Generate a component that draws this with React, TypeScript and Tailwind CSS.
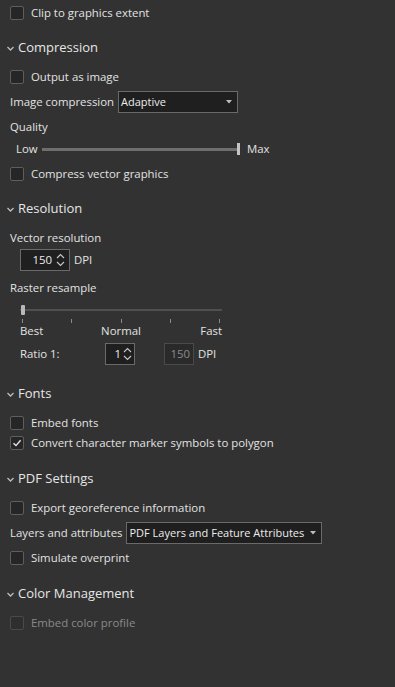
import React from 'react';

const FONT = { fontFamily: '"Open Sans", "Noto Sans", "Liberation Sans", sans-serif' };

function Check({ checked = false, disabled = false }: { checked?: boolean; disabled?: boolean }) {
  return (
    <span
      className={`w-[14px] h-[14px] rounded-[2px] border flex items-center justify-center shrink-0 ${
        disabled ? 'border-[#4a4a4a] bg-[#2e2e2e]' : 'border-[#5e5e5e] bg-[#262626]'
      }`}
    >
      {checked && (
        <svg width="10" height="10" viewBox="0 0 10 10">
          <path d="M1.5 5.2 L4 7.6 L8.6 2.2" fill="none" stroke="#e6e6e6" strokeWidth="1.4" />
        </svg>
      )}
    </span>
  );
}

function CheckRow({ label, checked, disabled, className }: { label: string; checked?: boolean; disabled?: boolean; className: string }) {
  return (
    <div className={`flex items-center pl-[10px] gap-[7px] ${className}`}>
      <Check checked={checked} disabled={disabled} />
      <span className={`text-[11.4px] ${disabled ? 'text-[#8a8a8a]' : 'text-[#e2e2e2]'}`}>{label}</span>
    </div>
  );
}

function Header({ title, className }: { title: string; className: string }) {
  return (
    <div className={`flex items-center pl-[6px] gap-[3px] ${className}`}>
      <svg width="9" height="9" viewBox="0 0 9 9">
        <path d="M1.5 3 L4.5 6 L7.5 3" fill="none" stroke="#bdbdbd" strokeWidth="1.3" />
      </svg>
      <span className="text-[13px] text-[#e6e6e6]">{title}</span>
    </div>
  );
}

function Label({ text, className }: { text: string; className: string }) {
  return (
    <div className={`flex items-center pl-[10px] text-[11.4px] text-[#e2e2e2] ${className}`}>{text}</div>
  );
}

function Arrows() {
  return (
    <svg width="9" height="16" viewBox="0 0 9 16">
      <path d="M1 6 L4.5 2.5 L8 6" fill="none" stroke="#c8c8c8" strokeWidth="1.1" />
      <path d="M1 10 L4.5 13.5 L8 10" fill="none" stroke="#c8c8c8" strokeWidth="1.1" />
    </svg>
  );
}

function Dropdown({ value, className }: { value: string; className: string }) {
  return (
    <div className={`h-[22px] border border-[#6a6a6a] bg-[#1f1f1f] flex items-center justify-between pl-[2px] pr-[5px] ${className}`}>
      <span className="text-[11px] text-[#ececec] whitespace-nowrap">{value}</span>
      <svg width="6" height="4" viewBox="0 0 6 4" className="shrink-0">
        <path d="M0 0 L6 0 L3 3.5 Z" fill="#bdbdbd" />
      </svg>
    </div>
  );
}

export default function App() {
  return (
    <div className="w-[395px] h-[687px] bg-[#323232] overflow-hidden" style={FONT}>
      <CheckRow label="Clip to graphics extent" className="h-[26px]" />

      <Header title="Compression" className="h-[24px] mt-[10px]" />
      <CheckRow label="Output as image" className="h-[24px] mt-[5px]" />
      <div className="flex items-center h-[24px] mt-[1px] pl-[10px] gap-[4px]">
        <span className="text-[11.4px] text-[#e2e2e2]">Image compression</span>
        <Dropdown value="Adaptive" className="w-[120px]" />
      </div>
      <Label text="Quality" className="h-[24px] mt-[1px]" />
      <div className="flex items-center h-[20px] pl-[16px] gap-[4px]">
        <span className="text-[11.4px] text-[#e2e2e2] w-[22px]">Low</span>
        <div className="w-[195px] h-[3px] bg-[#6e6e6e] mt-[1px]" />
        <div className="w-[3px] h-[12px] bg-[#c4c4c4] -ml-[4px]" />
        <span className="text-[11.4px] text-[#e2e2e2] ml-[3px]">Max</span>
      </div>
      <CheckRow label="Compress vector graphics" className="h-[24px] mt-[3px]" />

      <Header title="Resolution" className="h-[24px] mt-[11px]" />
      <Label text="Vector resolution" className="h-[24px] mt-[5px]" />
      <div className="flex items-center h-[22px] pl-[20px] gap-[4px] -mt-[1px]">
        <div className="w-[50px] h-[22px] border border-[#6a6a6a] bg-[#1f1f1f] flex items-center justify-end pr-[4px] gap-[4px]">
          <span className="text-[11.4px] text-[#ececec]">150</span>
          <Arrows />
        </div>
        <span className="text-[11.4px] text-[#e2e2e2]">DPI</span>
      </div>
      <Label text="Raster resample" className="h-[24px] mt-[5px]" />
      <div className="pl-[20px] mt-[4px] w-[222px]">
        <div className="relative h-[12px] flex items-center">
          <div className="w-full h-[2px] bg-[#505050]" />
          <div className="absolute left-[1px] top-[1px] w-[4px] h-[10px] bg-[#b8b8b8] rounded-[1px]" />
        </div>
        <div className="flex justify-between px-[2px] mt-[3px] h-[4px]">
          <span className="w-[1px] h-[4px] bg-[#8a8a8a]" />
          <span className="w-[1px] h-[4px] bg-[#8a8a8a]" />
          <span className="w-[1px] h-[4px] bg-[#8a8a8a]" />
          <span className="w-[1px] h-[4px] bg-[#8a8a8a]" />
          <span className="w-[1px] h-[4px] bg-[#8a8a8a]" />
        </div>
        <div className="grid grid-cols-3 text-[11.4px] text-[#e2e2e2] h-[16px] leading-[16px]">
          <span>Best</span>
          <span className="text-center">Normal</span>
          <span className="text-right">Fast</span>
        </div>
      </div>
      <div className="flex items-center h-[22px] mt-[4px] pl-[20px]">
        <span className="text-[11.4px] text-[#e2e2e2] w-[85px]">Ratio 1:</span>
        <div className="w-[30px] h-[22px] border border-[#6a6a6a] bg-[#1f1f1f] flex items-center justify-end pr-[2px] gap-[2px]">
          <span className="text-[11.4px] text-[#ececec]">1</span>
          <Arrows />
        </div>
        <div className="w-[30px] h-[22px] border border-[#4a4a4a] bg-[#2a2a2a] flex items-center justify-end pr-[3px] ml-[29px]">
          <span className="text-[11.4px] text-[#8a8a8a]">150</span>
        </div>
        <span className="text-[11.4px] text-[#e2e2e2] ml-[4px]">DPI</span>
      </div>

      <Header title="Fonts" className="h-[24px] mt-[17px]" />
      <CheckRow label="Embed fonts" className="h-[20px] mt-[7px]" />
      <CheckRow label="Convert character marker symbols to polygon" checked className="h-[20px]" />

      <Header title="PDF Settings" className="h-[24px] mt-[14px]" />
      <CheckRow label="Export georeference information" className="h-[24px] mt-[5px]" />
      <div className="flex items-center h-[24px] mt-[1px] pl-[10px] gap-[4px]">
        <span className="text-[11.4px] text-[#e2e2e2]">Layers and attributes</span>
        <Dropdown value="PDF Layers and Feature Attributes" className="w-[196px]" />
      </div>
      <CheckRow label="Simulate overprint" className="h-[24px] mt-[1px]" />

      <Header title="Color Management" className="h-[24px] mt-[12px]" />
      <CheckRow label="Embed color profile" disabled className="h-[24px] mt-[5px]" />
    </div>
  );
}
